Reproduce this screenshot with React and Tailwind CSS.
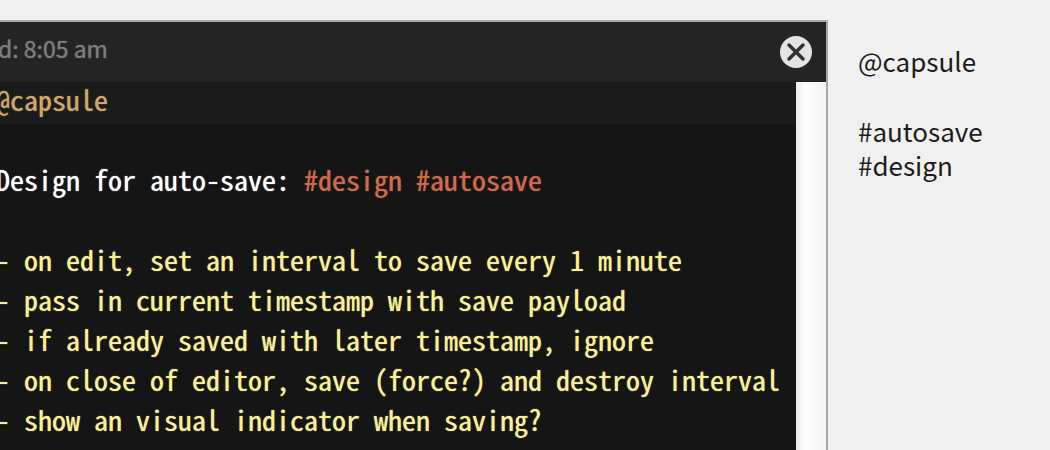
const notes = [
  'on edit, set an interval to save every 1 minute',
  'pass in current timestamp with save payload',
  'if already saved with later timestamp, ignore',
  'on close of editor, save (force?) and destroy interval',
  'show an visual indicator when saving?',
];

function CloseIcon() {
  return (
    <svg viewBox="0 0 32 32" className="block size-8" aria-hidden="true">
      <circle cx="16" cy="16" r="16" fill="#e4e4e4" />
      <path d="M9 9L23 23M23 9L9 23" stroke="#333333" strokeWidth="3.5" strokeLinecap="round" />
    </svg>
  );
}

function Editor() {
  return (
    <section className="flex min-w-0 flex-1 flex-col border-t-2 border-r-2 border-[#a8a8a8] bg-[#242424]">
      <header className="flex h-15 shrink-0 items-center justify-between pr-3.5 text-[23px] leading-8 text-[#7c7c7c]">
        <span className="-ml-0.5 pb-2 [text-shadow:0_0_1px_currentColor]">d: 8:05 am</span>
        <button type="button" aria-label="Close" className="rounded-full">
          <CloseIcon />
        </button>
      </header>
      <div className="flex flex-1">
        <div className="min-w-0 flex-1 overflow-hidden bg-[#151515] font-['Noto_Sans_Mono_CJK_SC','DejaVu_Sans_Mono',monospace] text-[28px] leading-10 whitespace-pre text-[#f8ef98] [text-shadow:0_0_1px_currentColor]">
          <div className="bg-[#1b1b1b] pb-2">
            <p className="-ml-1 leading-[34px] text-[#cda869]">@capsule</p>
          </div>
          <div className="-ml-1 pt-[35px]">
            <p className="text-white">
              Design for auto-save: <span className="text-[#cf6a4c]">#design #autosave</span>
            </p>
            <ul className="pt-10">
              {notes.map((note) => (
                <li key={note}>- {note}</li>
              ))}
            </ul>
          </div>
        </div>
        <div className="w-7.5 shrink-0 bg-linear-to-r from-[#ebebeb] via-[#fdfdfd] via-30% to-[#f4f4f4]" />
      </div>
    </section>
  );
}

export default function App() {
  return (
    <main className="flex h-screen overflow-hidden bg-[#f0f0f0] pt-5 font-['Noto_Sans_CJK_SC',sans-serif]">
      <Editor />
      <aside className="w-[222px] shrink-0 pt-6 pl-7.5 text-[26px] leading-[34px] text-[#1c1c1c]">
        <a href="#capsule" className="block">@capsule</a>
        <a href="#autosave" className="mt-9 block">#autosave</a>
        <a href="#design" className="block">#design</a>
      </aside>
    </main>
  );
}
